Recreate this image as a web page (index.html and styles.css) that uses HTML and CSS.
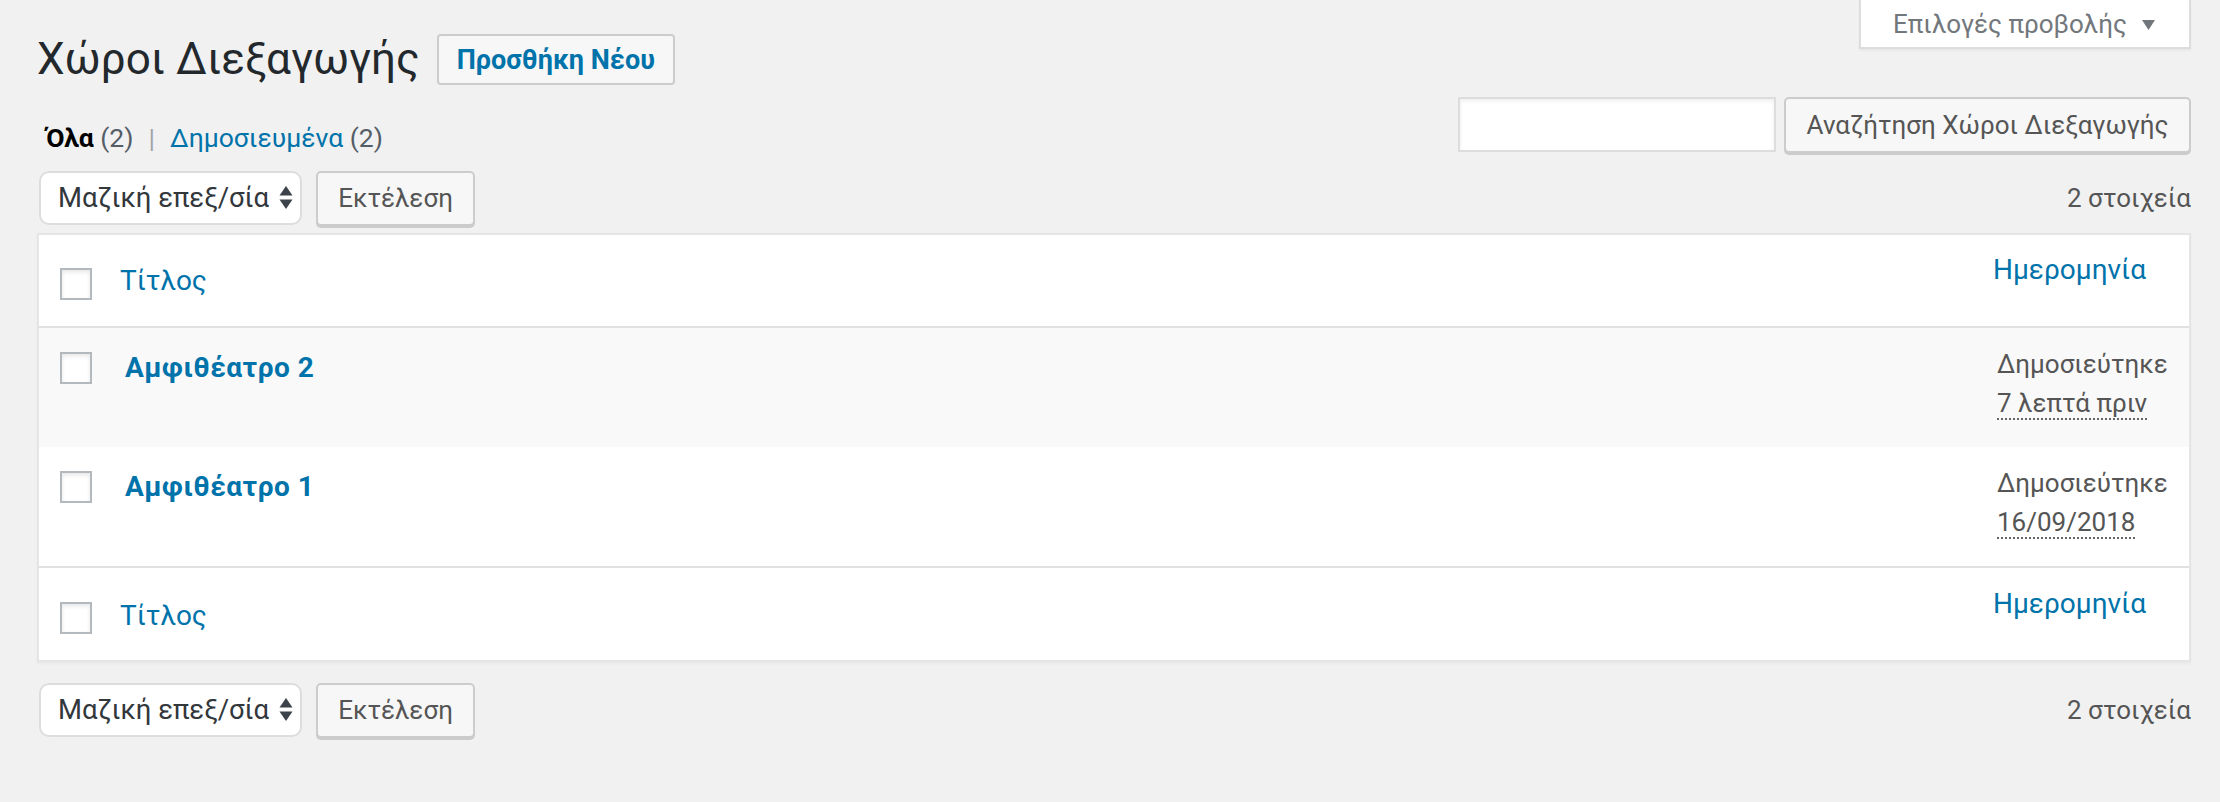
FILE: index.html
```html
<!DOCTYPE html>
<html lang="el">
<head>
<meta charset="utf-8">
<title>Χώροι Διεξαγωγής</title>
<link rel="stylesheet" href="styles.css">
</head>
<body>
<div class="wrap">
  <div class="top">
    <div class="title-row">
      <h1 class="page-title">Χώροι Διεξαγωγής</h1>
      <a class="add-new">Προσθήκη Νέου</a>
    </div>
    <div class="screen-options">
      <span>Επιλογές προβολής</span>
      <svg class="so-arrow" width="13" height="10" viewBox="0 0 13 10"><path d="M0 0H13L6.5 10Z" fill="#72777c"/></svg>
    </div>
  </div>

  <div class="filters">
    <ul class="subsubsub">
      <li><span class="current">Όλα</span> <span class="count">(2)</span><span class="sep">|</span></li>
      <li><a class="link">Δημοσιευμένα</a> <span class="count">(2)</span></li>
    </ul>
    <div class="search-box">
      <div class="search-input"></div>
      <span class="button search-btn">Αναζήτηση Χώροι Διεξαγωγής</span>
    </div>
  </div>

  <div class="tablenav">
    <div class="actions">
      <div class="select">
        <span>Μαζική επεξ/σία</span>
        <svg class="sel-arrows" width="14" height="23" viewBox="0 0 14 23"><path d="M7 0L13.5 9.5H0.5Z M0.5 13.5H13.5L7 23Z" fill="#3c434a"/></svg>
      </div>
      <span class="button apply">Εκτέλεση</span>
    </div>
    <div class="displaying-num">2 στοιχεία</div>
  </div>

  <table class="list">
    <thead>
      <tr>
        <th class="check"><span class="cb"></span></th>
        <th class="col-title head-title"><a class="link">Τίτλος</a></th>
        <th class="col-date head-date"><a class="link">Ημερομηνία</a></th>
      </tr>
    </thead>
    <tbody>
      <tr class="alt">
        <td class="check body-check"><span class="cb"></span></td>
        <td class="col-title body-title"><a class="link row-title">Αμφιθέατρο 2</a></td>
        <td class="col-date body-date">Δημοσιεύτηκε<br><abbr>7 λεπτά πριν</abbr></td>
      </tr>
      <tr>
        <td class="check body-check"><span class="cb"></span></td>
        <td class="col-title body-title"><a class="link row-title">Αμφιθέατρο 1</a></td>
        <td class="col-date body-date">Δημοσιεύτηκε<br><abbr>16/09/2018</abbr></td>
      </tr>
    </tbody>
    <tfoot>
      <tr>
        <th class="check foot-check"><span class="cb"></span></th>
        <th class="col-title foot-title"><a class="link">Τίτλος</a></th>
        <th class="col-date foot-date"><a class="link">Ημερομηνία</a></th>
      </tr>
    </tfoot>
  </table>

  <div class="tablenav bottom">
    <div class="actions">
      <div class="select">
        <span>Μαζική επεξ/σία</span>
        <svg class="sel-arrows" width="14" height="23" viewBox="0 0 14 23"><path d="M7 0L13.5 9.5H0.5Z M0.5 13.5H13.5L7 23Z" fill="#3c434a"/></svg>
      </div>
      <span class="button apply">Εκτέλεση</span>
    </div>
    <div class="displaying-num">2 στοιχεία</div>
  </div>
</div>
</body>
</html>
```

FILE: styles.css
```css
* { box-sizing: border-box; }
html, body { margin: 0; padding: 0; }
body {
  background: #f1f1f1;
  font-family: Roboto, "Liberation Sans", sans-serif;
  color: #444;
  font-size: 26px;
  width: 2220px;
  height: 802px;
  overflow: hidden;
}
.wrap { padding: 0 29px 0 37px; }

.link { color: #0073aa; text-decoration: none; }

/* top */
.top { display: flex; justify-content: space-between; align-items: flex-start; }
.title-row { display: flex; align-items: center; margin-top: 34px; height: 51px; }
.page-title {
  margin: 0 17px 0 0;
  font-size: 44px;
  font-weight: 400;
  line-height: 51px;
  color: #23282d;
}
.add-new {
  display: flex; align-items: center;
  height: 51px;
  padding: 0 18px;
  border: 2px solid #ccc;
  border-radius: 4px;
  background: #f7f7f7;
  color: #0073aa;
  font-size: 27px;
  font-weight: 700;
}
.screen-options {
  display: flex; align-items: center;
  width: 332px; height: 49px;
  padding-left: 32px;
  background: #fff;
  border: 2px solid #ddd;
  border-top: 0;
  box-shadow: 0 2px 2px rgba(0,0,0,.04);
  color: #72777c;
  font-size: 26px;
}
.so-arrow { margin-left: 15px; margin-top: 2px; }

/* filters */
.filters { display: flex; justify-content: space-between; align-items: flex-start; margin-top: 12px; }
.subsubsub {
  display: flex;
  list-style: none;
  margin: 26px 0 0 9px; padding: 0;
  font-size: 26.5px; line-height: 30px;
  color: #555d66;
}
.subsubsub .current { color: #000; font-weight: 700; }
.subsubsub .sep { color: #a0a5aa; margin: 0 15px 0 15px; }
.search-box { display: flex; align-items: flex-start; gap: 8px; }
.search-input {
  width: 318px; height: 55px;
  background: #fff;
  border: 2px solid #ddd;
  box-shadow: inset 0 2px 4px rgba(0,0,0,.07);
}
.button {
  display: flex; align-items: center; justify-content: center;
  height: 56px;
  border: 2px solid #ccc;
  border-radius: 5px;
  background: #f7f7f7;
  box-shadow: 0 2px 0 #ccc;
  color: #555;
  font-size: 26px;
  white-space: nowrap;
}
.search-btn { width: 407px; }

/* tablenav */
.tablenav { display: flex; justify-content: space-between; align-items: center; margin-top: 18px; height: 54px; }
.tablenav.bottom { margin-top: 21px; }
.actions { display: flex; align-items: flex-start; gap: 14px; margin-left: 2px; }
.select {
  display: flex; align-items: center; justify-content: space-between;
  width: 263px; height: 54px;
  padding: 0 7px 0 17px;
  background: #fff;
  border: 2px solid #ddd;
  border-radius: 10px;
  color: #32373c;
  font-size: 27.5px;
}
.apply { width: 159px; height: 55px; }
.displaying-num { color: #555; font-size: 26px; }

/* table */
.list {
  width: 100%;
  margin-top: 8px;
  border-spacing: 0;
  border: 2px solid #e5e5e5;
  background: #fff;
  box-shadow: 0 2px 2px rgba(0,0,0,.04);
}
.list th, .list td { text-align: left; vertical-align: top; padding: 0; font-weight: 400; }
.list thead th { border-bottom: 2px solid #e1e1e1; }
.list tfoot th { border-top: 2px solid #e1e1e1; }
.list tr.alt td { background: #f9f9f9; }
.check { width: 66px; padding-left: 21px !important; }
.col-date { width: 212px; }

.cb {
  display: block;
  width: 32px; height: 32px;
  background: #fff;
  border: 2px solid #b4b9be;
  box-shadow: inset 0 2px 4px rgba(0,0,0,.1);
}

.list thead th.check { padding-top: 33px; padding-bottom: 26px; }
.head-title { padding: 26px 0 0 15px !important; font-size: 28px; line-height: 40px; }
.head-date { padding: 15px 0 0 16px !important; font-size: 28px; line-height: 40px; }

.body-check { padding-top: 24px !important; }
.body-title { padding: 20px 0 0 20px !important; font-size: 28px; line-height: 40px; }
.row-title { font-weight: 700; letter-spacing: 0.5px; }
.body-date { padding: 17px 0 24px 20px !important; font-size: 26px; line-height: 39px; color: #555; }
.body-date abbr { text-decoration: none; border-bottom: 2px dotted #666; }

.list tfoot th.check { padding-top: 34px; padding-bottom: 26px; }
.foot-title { padding: 28px 0 0 15px !important; font-size: 28px; line-height: 40px; }
.foot-date { padding: 16px 0 0 16px !important; font-size: 28px; line-height: 40px; }
```
